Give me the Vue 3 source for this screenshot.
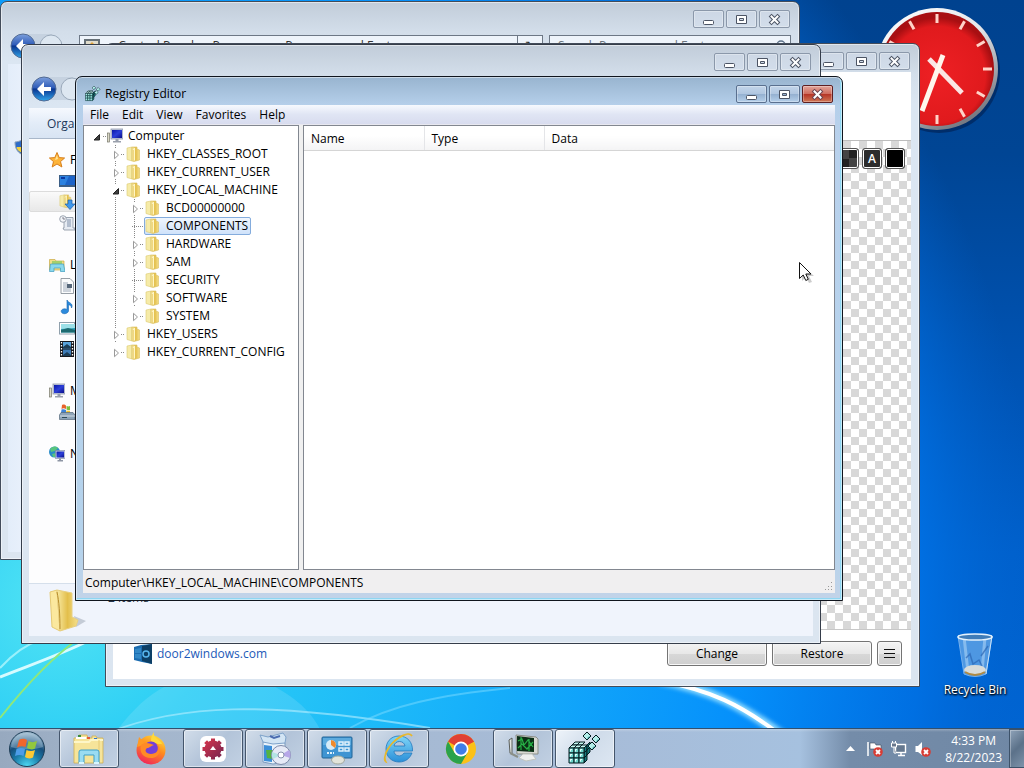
<script setup>
const controls = [
  { kind: 'min', label: 'Minimize' },
  { kind: 'max', label: 'Maximize' },
  { kind: 'close', label: 'Close' },
]
const menus = ['File', 'Edit', 'View', 'Favorites', 'Help']
const tree = [
  { name: 'Computer', level: 0, state: 'expanded', icon: 'i-computer' },
  { name: 'HKEY_CLASSES_ROOT', level: 1, state: 'collapsed' },
  { name: 'HKEY_CURRENT_USER', level: 1, state: 'collapsed' },
  { name: 'HKEY_LOCAL_MACHINE', level: 1, state: 'expanded' },
  { name: 'BCD00000000', level: 2, state: 'collapsed' },
  { name: 'COMPONENTS', level: 2, state: 'leaf', selected: true },
  { name: 'HARDWARE', level: 2, state: 'collapsed' },
  { name: 'SAM', level: 2, state: 'collapsed' },
  { name: 'SECURITY', level: 2, state: 'leaf' },
  { name: 'SOFTWARE', level: 2, state: 'collapsed' },
  { name: 'SYSTEM', level: 2, state: 'collapsed', last: true },
  { name: 'HKEY_USERS', level: 1, state: 'collapsed' },
  { name: 'HKEY_CURRENT_CONFIG', level: 1, state: 'collapsed', last: true },
]
const places = [
  { label: 'Favorites', icon: 'i-star', items: ['i-desktop', 'i-downloads', 'i-recent'] },
  { label: 'Libraries', icon: 'i-libraries', items: ['i-document', 'i-music', 'i-picture', 'i-video'] },
  { label: 'My Computer', icon: 'i-computer', items: ['i-drive'] },
  { label: 'Network', icon: 'i-network', items: [] },
]
const tasks = [
  { icon: 't-explorer', label: 'Windows Explorer', open: true },
  { icon: 't-firefox', label: 'Firefox', open: false },
  { icon: 't-gear', label: 'Settings tool', open: true },
  { icon: 't-setup', label: 'Programs and Features', open: true },
  { icon: 't-panel', label: 'Control Panel', open: true },
  { icon: 't-ie', label: 'Internet Explorer', open: true },
  { icon: 't-chrome', label: 'Chrome', open: false },
  { icon: 't-monitor', label: 'System monitor', open: true },
  { icon: 't-regedit', label: 'Registry Editor', open: true, active: true },
]
const cubes = [
  [1, 16], [6, 16], [11, 16], [1, 21], [6, 21], [11, 21], [1, 26], [6, 26], [11, 26],
]
const tops = [[7, 10], [12, 10], [4, 13], [9, 13], [14, 13]]
const sides = [[16, 16], [16, 21], [16, 26], [19, 13], [19, 18]]
const floating = [[19, 4], [28, 7], [24, 14]]
const ticks = [0, 30, 60, 90, 120, 150, 180, 210, 240, 270, 300, 330]
</script>

<template>
  <div class="desktop">
    <svg width="0" height="0" class="defs" aria-hidden="true">
      <defs>
        <linearGradient id="gFolder" x1="0" x2="1"><stop offset="0" stop-color="#f8e9a2" /><stop offset=".5" stop-color="#e3bf4c" /><stop offset="1" stop-color="#f5e08c" /></linearGradient>
        <linearGradient id="gBack" x1="0" y1="0" x2="0" y2="1"><stop offset="0" stop-color="#7c9fdc" /><stop offset=".45" stop-color="#2f5cb8" /><stop offset=".5" stop-color="#0a3590" /><stop offset="1" stop-color="#31a6ea" /></linearGradient>
        <radialGradient id="gOrb" cx=".5" cy="1" r="1"><stop offset="0" stop-color="#4fdcf6" /><stop offset=".4" stop-color="#1a7ba8" /><stop offset=".65" stop-color="#174f7c" /><stop offset="1" stop-color="#aac4d6" /></radialGradient>
        <linearGradient id="gFox" x1=".8" y1="0" x2=".3" y2="1"><stop offset="0" stop-color="#ffde3b" /><stop offset=".45" stop-color="#ff8a1e" /><stop offset="1" stop-color="#f0245c" /></linearGradient>
        <linearGradient id="gIe" x1="0" y1="0" x2="0" y2="1"><stop offset="0" stop-color="#7fd6f8" /><stop offset="1" stop-color="#2a8fd8" /></linearGradient>
        <linearGradient id="gGear" gradientUnits="userSpaceOnUse" x1="6" y1="6" x2="28" y2="28"><stop offset="0" stop-color="#e0364c" /><stop offset="1" stop-color="#6d2350" /></linearGradient>
        <linearGradient id="gScreen" x1="0" y1="0" x2="1" y2="1"><stop offset="0" stop-color="#0a17a8" /><stop offset=".5" stop-color="#2c3fd8" /><stop offset="1" stop-color="#0a108c" /></linearGradient>
        <symbol id="i-folder" viewBox="0 0 16 16">
          <path d="M1 2 L6 1 L6 15 L1 13.500 Z" fill="#f6eba8" stroke="#dcc970" stroke-width=".6" />
          <path d="M6 1 H11 V3 L13.500 4 V14 L8 15.500 L6 15 Z" fill="url(#gFolder)" stroke="#d9bd5c" stroke-width=".6" />
          <path d="M7 4 L8.500 2 V14.500" fill="none" stroke="#fff6c4" />
        </symbol>
        <symbol id="i-computer" viewBox="0 0 16 16">
          <rect x=".5" y="5" width="2" height="9" fill="#dad8c6" stroke="#77776a" stroke-width=".7" />
          <rect x="4" y="1" width="12" height="10" fill="#c6cde0" stroke="#8e96aa" stroke-width=".8" />
          <rect x="5" y="2" width="10" height="8" fill="url(#gScreen)" />
          <path d="M8.500 11 H11.500 V13 H14 V14.500 H6 V13 H8.500 Z" fill="#9aa0ac" />
        </symbol>
        <symbol id="i-star" viewBox="0 0 16 16"><path d="M8 .5 L10.200 5.600 L15.600 6 L11.500 9.600 L12.900 15 L8 12 L3.200 15 L4.500 9.600 L.4 6 L5.800 5.600 Z" fill="#fdb43a" stroke="#d77f1c" /><path d="M8 3 L9 7 L6 8 Z" fill="#ffe49a" /></symbol>
        <symbol id="i-desktop" viewBox="0 0 16 16"><rect y="2" width="16" height="12" fill="#3c5e86" /><rect x="1" y="3" width="15" height="9" fill="#1c63c8" /><path d="M1 3 H10 L6 12 H1 Z" fill="#2d82e0" /><path d="M2 4 H6 V6 H2 Z" fill="#0b37a0" /></symbol>
        <symbol id="i-downloads" viewBox="0 0 16 16"><use href="#i-folder" x="0" y="-1" width="14" height="16" /><path d="M9 6 H13 V10 H16 L11 15.500 L6 10 H9 Z" fill="#3f98ec" stroke="#1a5ca8" stroke-width=".7" /></symbol>
        <symbol id="i-recent" viewBox="0 0 16 16"><path d="M5 2.500 H14 V13 H16 V15 H5 L4 13 H5 Z" fill="#e6ebf2" stroke="#8790a0" stroke-width=".8" /><path d="M8 5 H12 M8 7 H12 M8 9 H12 M8 11 H12" stroke="#7e90aa" /><circle cx="4" cy="4" r="3.300" fill="#f3f5f8" stroke="#8790a0" stroke-width=".8" /><path d="M4 2 V4 H6" fill="none" stroke="#667" stroke-width=".8" /></symbol>
        <symbol id="i-libraries" viewBox="0 0 16 16"><path d="M.5 2.500 H6 L7 4 H15 V13 H.5 Z" fill="#f3de86" stroke="#caa945" stroke-width=".7" /><path d="M3 7 H13 V4 H3 Z" fill="#a5cf6c" /><path d="M1.500 7 H14.500 L16 14.500 H11.500 V11 H5 V14.500 H.5 Z" fill="#8ad8ec" stroke="#3f9cc0" stroke-width=".7" /></symbol>
        <symbol id="i-document" viewBox="0 0 16 16"><path d="M2 .5 H11 L14.500 4 V15.500 H2 Z" fill="#fbfcfd" stroke="#7e8791" stroke-width=".8" /><path d="M4 5 H9 M4 7 H9 M4 9 H9 M4 11 H12 M4 13 H12" stroke="#8b97a8" stroke-width=".8" /><rect x="8" y="6" width="5" height="4" fill="#56677a" /></symbol>
        <symbol id="i-music" viewBox="0 0 16 16"><path d="M8 1 C9 4 15 4 12.500 9 C12.500 6.500 10.500 6 9.500 5.500 V12 C9 15 3 16 2.200 12.500 C2 10 6 9 8 10.500 Z" fill="#2c8adc" stroke="#1667b4" stroke-width=".6" /></symbol>
        <symbol id="i-picture" viewBox="0 0 16 16"><rect x=".5" y="2.500" width="15" height="11.500" fill="#fff" stroke="#90a0ac" /><rect x="2" y="4" width="14" height="8.500" fill="#2d9fb8" /><path d="M2 4 H16 V8 L2 9 Z" fill="#9ce0e8" /><path d="M2 10 L9 8 L16 10 V12.500 H2 Z" fill="#1d6a70" /></symbol>
        <symbol id="i-video" viewBox="0 0 16 16"><rect x="1" width="14" height="16" fill="#17191f" /><rect x="4" y="1" width="8" height="6.500" fill="#5aa4dc" /><rect x="4" y="8.500" width="8" height="6.500" fill="#3e7cb8" /><path d="M4 6 L8 3 L12 6 V7.500 H4 Z M4 14 L8 11 L12 14 V15 H4 Z" fill="#1c3d56" /><path d="M2.500 1 V16 M13.500 1 V16" stroke="#fff" stroke-width="1.300" stroke-dasharray="1.500 1.500" /></symbol>
        <symbol id="i-drive" viewBox="0 0 16 16"><path d="M3 1 C5 0 6 1 7 1.500 V5 C5 4 4 4 2.500 5 Z" fill="#e8632c" /><path d="M7.500 2 C9 2.500 10 2.500 11 2 V6 C10 6.500 8.500 6 7.500 5.500 Z" fill="#7cc03c" /><path d="M2.500 5.500 C4 5 5.500 5 7 6 V9 H2 Z" fill="#3d83d8" /><path d="M7.500 6.500 L11 7 V9 H7 Z" fill="#f6c52c" /><path d="M2 8.500 H14 L16 11 V15.500 H.5 V11 Z" fill="#8da4b8" stroke="#566a7c" stroke-width=".7" /><path d="M1 12 H16" stroke="#d0dbe4" /><rect x="3" y="13" width="5" height="1" fill="#2d4a58" /></symbol>
        <symbol id="i-network" viewBox="0 0 16 16"><circle cx="5.500" cy="6" r="5.500" fill="#2a8cc8" /><path d="M1 3 C4 0 7 0 9 2 L6 5 L2 6 Z M3 8 L7 7 V11 H4 Z" fill="#57c47e" /><rect x="6.500" y="4.500" width="9.500" height="8" fill="#d4dbe6" stroke="#7a86a0" stroke-width=".6" /><rect x="7.500" y="5.500" width="7.500" height="6" fill="url(#gScreen)" /><path d="M10 12.500 H12 V14 H14 V15.500 H8.500 V14 H10 Z" fill="#8d95a4" /></symbol>
        <symbol id="i-shield" viewBox="0 0 16 16"><path d="M8 1 C10 2 13 3 15 3 C15 9 13 13 8 15.500 C3 13 1 9 1 3 C3 3 6 2 8 1 Z" fill="#2e6cc8" stroke="#8ea2b8" /><path d="M8 2 V8 H14 C14 5 14.500 4 14 4 C12 4 10 3 8 2 Z M8 8 V14 C5 12.500 3 11 2.500 8 Z" fill="#f4d23e" /></symbol>
        <symbol id="t-explorer" viewBox="0 0 34 34">
          <path d="M2 6 H6 L7 3 H15 L16 6 H20 V4 H24 L25 6 H31 V31 H2 Z" fill="#f6e49a" stroke="#cfae52" stroke-width=".8" />
          <path d="M4 5 H14 V7 H4 Z" fill="#fff" /><rect x="6" y="3" width="3" height="2" fill="#3c8d3c" /><rect x="15" y="5" width="3" height="2" fill="#e45a36" /><rect x="22" y="6" width="3" height="2" fill="#2d72d0" />
          <path d="M2 10 H17 L19 8 H31" fill="none" stroke="#fdf6c8" stroke-width="2" /><path d="M27 8 V30" stroke="#e6ca72" />
          <path d="M7 31 V20 Q7 18 9 18 H25 Q27 18 27 20 V31 H22 V23 H12 V31 Z" fill="#9adcf2" stroke="#3f9fc8" /><path d="M7 31 H12 M22 31 H27" stroke="#d8f6ff" stroke-width="2" />
        </symbol>
        <symbol id="t-firefox" viewBox="0 0 34 34">
          <circle cx="17" cy="18" r="14.500" fill="url(#gFox)" /><path d="M20 0 C19 5 23 6 27 10 L31 17 L28 12 L23 12 L17 9 C17 5 18 3 20 0 Z" fill="#ffd83a" /><path d="M5 5 L3 15 L12 12 L9 9 Z" fill="#ff9a24" />
          <circle cx="17" cy="17" r="7.500" fill="#7340d8" /><path d="M7 13 C11 9 17 12 20 13 C16 14 16 16 13 16 C9 19 14 24 21 21 C24 20 25 15 22 11 C28 15 27 26 17 26 C9 26 5 20 7 13 Z" fill="#ff8a26" />
        </symbol>
        <symbol id="t-gear" viewBox="0 0 34 34">
          <rect x="4" y="4" width="26" height="26" rx="6" fill="#fff" /><circle cx="17" cy="17" r="8.500" fill="url(#gGear)" /><path d="M17 6.500 V27.500 M6.500 17 H27.500 M9.600 9.600 L24.400 24.400 M24.400 9.600 L9.600 24.400" stroke="url(#gGear)" stroke-width="4" /><path d="M17 14 L20 18 H14 Z" fill="#fff" />
        </symbol>
        <symbol id="t-setup" viewBox="0 0 34 34">
          <path d="M5 10 L17 8 L27 11 V30 L15 32 L5 30 Z" fill="#eaf3fb" stroke="#7c9cc0" /><path d="M5 10 L2 3 L10 5 L25 1 L28 5 L27 11 L15 12 Z" fill="#d3e5f4" stroke="#7ea3ca" /><path d="M6 13 L14 14 V30 L6 29 Z" fill="#3d8fd8" /><path d="M8 18 L15 18 V27 L9 26 Z" fill="#53b341" /><path d="M12 4 L16 6 L22 4" fill="none" stroke="#4b6cb0" stroke-width="2" />
          <circle cx="23" cy="23" r="9.500" fill="#e6eaf6" stroke="#7e8aa8" /><path d="M23 23 L31 18 A9 9 0 0 1 32 26 Z" fill="#b7a7e8" /><path d="M23 23 L15 27 A9 9 0 0 1 14 20 Z" fill="#b4e4e4" /><circle cx="23" cy="23" r="3" fill="#fff" stroke="#8792ae" />
        </symbol>
        <symbol id="t-panel" viewBox="0 0 34 34">
          <rect x="2" y="5" width="30" height="21" rx="1" fill="#3f94d2" stroke="#216597" /><rect x="3" y="6" width="28" height="7" fill="#71bae6" opacity=".6" /><circle cx="11" cy="13" r="5" fill="#d6ebf7" /><path d="M11 13 V8 A5 5 0 0 1 15 16 Z" fill="#f08a2c" /><g fill="none" stroke="#dff1fc" stroke-width="1.500"><rect x="19" y="10" width="4" height="3" /><rect x="25" y="10" width="4" height="3" /><rect x="19" y="16" width="4" height="3" /><rect x="25" y="16" width="4" height="3" /></g><path d="M7 21 H14" stroke="#dff1fc" stroke-width="2" stroke-dasharray="2 1" /><ellipse cx="18" cy="28" rx="6.500" ry="4" fill="#e3e4da" stroke="#a3a99c" />
        </symbol>
        <symbol id="t-ie" viewBox="0 0 34 34">
          <path d="M17 4 C8 4 4 11 4 17 C4 25 10 30 17 30 C24 30 28 26 30 21 H22 C19 26 12 24 12 19 H30.500 C31 10 25 4 17 4 Z M12 14 C13 8 22 8 23 14 Z" fill="url(#gIe)" stroke="#2379bd" stroke-width=".8" fill-rule="evenodd" /><path d="M30 4 C27 -1 15 4 8 14 C3 21 1 29 4 30 C0 22 8 12 17 6 C24 1 29 1 30 4 Z" fill="#fbd23c" stroke="#e8b82c" stroke-width="1.500" />
        </symbol>
        <symbol id="t-chrome" viewBox="0 0 34 34">
          <circle cx="17" cy="17" r="15" fill="#fbc117" /><path d="M17 17 L4 9.500 A15 15 0 0 1 30 9.500 Z" fill="#e04033" /><path d="M17 9.500 H30.500 L24 12 Z" fill="#e04033" /><path d="M4 9.500 A15 15 0 0 0 17 32 L23.500 20.700 L10.500 20.700 Z" fill="#2aa24c" /><circle cx="17" cy="17" r="7.500" fill="#fff" /><circle cx="17" cy="17" r="5.800" fill="#3f7de8" />
        </symbol>
        <symbol id="t-monitor" viewBox="0 0 34 34">
          <path d="M3 8 L6 6 V22 L4 21 Z" fill="#e4e6e2" stroke="#5b5f5a" /><path d="M10 3 L30 5 L32 7 V22 L11 22 Z" fill="#d8d9d2" stroke="#8a8d86" /><path d="M11 4 L28 6 V20 L11 19 Z" fill="#0c2f16" /><path d="M12 9 L16 7 L18 13 L22 8 L27 15 M12 16 L16 12 L21 17 L27 10 M15 5 V18 M23 7 V19" fill="none" stroke="#27b045" stroke-width="1.200" /><path d="M17 22 H26 L30 27 L20 29 L13 26 Z" fill="#eef0ee" stroke="#c0c4be" /><path d="M4 21 L12 25" stroke="#8a8f88" stroke-width="2" />
        </symbol>
        <symbol id="t-regedit" viewBox="0 0 34 34">
          <g stroke="#041c20" stroke-width="1" stroke-linejoin="round">
            <path v-for="(c, i) in tops" :key="'t' + i" d="M0 3 L3 0 H8 L5 3 Z" fill="#c4f6f0" :transform="`translate(${c[0] - 3} ${c[1]})`" />
            <path v-for="(c, i) in sides" :key="'s' + i" d="M0 0 L3 -3 V2 L0 5 Z" fill="#177a7c" :transform="`translate(${c[0]} ${c[1]})`" />
            <g v-for="(c, i) in cubes" :key="'c' + i" :transform="`translate(${c[0]} ${c[1]})`"><rect width="5" height="5" fill="#6fd8ce" /><path d="M1.200 1.500 H3 M1.500 1.500 V3.500" stroke="#e6fffc" fill="none" /></g>
            <g v-for="(c, i) in floating" :key="'f' + i" :transform="`translate(${c[0]} ${c[1]})`"><path d="M-4 0 L0 -4 L4 0 L0 4 Z" fill="#b4efea" /><path d="M1 1 L3.500 0 L0 3.500 Z" fill="#2d9494" stroke="none" /></g>
          </g>
        </symbol>
      </defs>
    </svg>

    <svg class="wallpaper" viewBox="0 0 1024 768" preserveAspectRatio="none" aria-hidden="true">
      <defs>
        <linearGradient id="wSky" x1="0" y1="0" x2="0" y2="1"><stop offset="0" stop-color="#00428f" /><stop offset=".2" stop-color="#004594" /><stop offset=".5" stop-color="#0054b5" /><stop offset=".72" stop-color="#0060cc" /><stop offset=".95" stop-color="#0064d2" /></linearGradient>
        <radialGradient id="wGlow" gradientUnits="userSpaceOnUse" cx="60" cy="600" r="980"><stop offset="0" stop-color="#52e4f4" /><stop offset=".16" stop-color="#2bcdf5" /><stop offset=".42" stop-color="#18b2fa" /><stop offset=".7" stop-color="#0590fb" /><stop offset=".88" stop-color="#0072e6" stop-opacity=".8" /><stop offset="1" stop-color="#0062cc" stop-opacity="0" /></radialGradient>
        <filter id="soft"><feGaussianBlur stdDeviation="2" /></filter>
      </defs>
      <rect width="1024" height="768" fill="url(#wSky)" />
      <rect width="1024" height="768" fill="url(#wGlow)" />
      <path d="M110 740 C145 690 170 680 215 670 L270 684 C300 700 315 715 325 740 Z" fill="#fff" opacity=".12" />
      <path d="M110 732 C180 705 260 700 430 728" fill="none" stroke="#b8efff" stroke-width="2" opacity=".6" />
      <path d="M350 728 C390 705 440 695 510 688" fill="none" stroke="#7ddcff" stroke-width="2" opacity=".5" />
      <path d="M0 677 C30 665 60 655 90 640" fill="none" stroke="#d6fbff" stroke-width="3" />
      <path d="M0 668 C12 655 24 645 40 640" fill="none" stroke="#9af0fb" stroke-width="2" />
      <path d="M0 718 C22 690 48 660 82 636" fill="none" stroke="#8fe87a" stroke-width="2" />
      <path d="M660 680 C710 690 740 704 786 738" fill="none" stroke="#8edaff" stroke-width="9" filter="url(#soft)" />
      <path d="M660 681 C710 690 740 704 782 736" fill="none" stroke="#fff" stroke-width="4" />
    </svg>

    <svg class="clock" viewBox="0 0 132 132" role="img" aria-label="Clock">
      <defs>
        <linearGradient id="rim" x1="0" y1="0" x2=".6" y2="1"><stop offset="0" stop-color="#fff" /><stop offset=".5" stop-color="#e4e6ea" /><stop offset="1" stop-color="#777b84" /></linearGradient>
        <radialGradient id="face" cx=".5" cy=".55" r=".5"><stop offset="0" stop-color="#ee2024" /><stop offset=".85" stop-color="#e01a1d" /><stop offset="1" stop-color="#a80f12" /></radialGradient>
      </defs>
      <circle cx="67" cy="68" r="61" fill="#001c48" opacity=".55" />
      <circle cx="65" cy="65" r="61" fill="url(#rim)" />
      <circle cx="65" cy="65" r="57" fill="url(#face)" />
      <path v-for="t in ticks" :key="t" d="M65 10 V19" stroke="#ffd3c8" stroke-width="3" :transform="`rotate(${t} 65 65)`" />
      <path d="M57 55 L90 89" stroke="#fbe6e4" stroke-width="5" />
      <path d="M71 51 L50 107" stroke="#fff6ec" stroke-width="5" />
    </svg>

    <a class="bin" href="#">
      <svg width="40" height="46" viewBox="0 0 40 46" aria-hidden="true">
        <path d="M3 4 H37 L31 42 Q20 47 9 42 Z" fill="#8fc0ee" opacity=".55" stroke="#d5ecff" /><path d="M3 4 H37 L31 42" fill="none" stroke="#c8e2f8" /><path d="M9 5 L13 40 M30 5 L27 40" stroke="#d8efff" stroke-width="3" opacity=".4" /><path d="M11 26 L15 22 L18 32 L24 28 L27 34 M33 14 L26 24" fill="none" stroke="#2c66b4" stroke-width="1.500" opacity=".7" /><ellipse cx="20" cy="38" rx="11" ry="5" fill="#d9dcda" /><path d="M10 40 Q20 46 30 40" fill="none" stroke="#b08a42" stroke-width="2" /><ellipse cx="20" cy="5" rx="17" ry="3" fill="#3f7cb8" stroke="#e3f1fc" stroke-width="1.500" />
      </svg>
      <span>Recycle Bin</span>
    </a>

    <section class="window programs" aria-label="Programs and Features">
      <header class="caption">
        <div class="controls"><button v-for="c in controls" :key="c.kind" :aria-label="c.label"><svg width="15" height="13" viewBox="0 0 15 13"><rect v-if="c.kind === 'min'" x="2.500" y="7.500" width="10" height="4" rx="1" fill="#fff" stroke="#4c5464" /><path v-else-if="c.kind === 'max'" d="M2.500 2.500 H12.500 V10.500 H2.500 Z M5.500 5.500 H9.500 V7.500 H5.500 Z" fill="#fff" fill-rule="evenodd" stroke="#4c5464" /><g v-else fill="none"><path d="M4.500 3.500 L10.500 9.500 M10.500 3.500 L4.500 9.500" stroke="#4c5464" stroke-width="4" stroke-linecap="square" /><path d="M4.500 3.500 L10.500 9.500 M10.500 3.500 L4.500 9.500" stroke="#fff" stroke-width="2" stroke-linecap="square" /></g></svg></button></div>
      </header>
      <div class="nav">
        <svg class="back" viewBox="0 0 54 26" aria-hidden="true"><path d="M13 1 H42 V24 H13" fill="#b8c6d6" opacity=".5" /><circle cx="13" cy="13" r="12" fill="url(#gBack)" stroke="#526b94" /><path d="M6 13 L13 6 V11 H20 V15 H13 V20 Z" fill="#fff" /><circle cx="41" cy="13" r="11" fill="#dde7f1" stroke="#9aa9ba" /></svg>
        <div class="address"><svg class="ic" aria-hidden="true"><rect y="1" width="16" height="13" fill="#667077" /><rect x="2" y="3" width="12" height="10" fill="#e0dccb" /><path d="M4 8 L8 4 L12 8 Z" fill="#e2a33a" /></svg><span>▸&nbsp; Control Panel&nbsp; ▸&nbsp; Programs&nbsp; ▸&nbsp; Programs and Features</span><button class="refresh" aria-label="Refresh">↻</button></div>
        <label class="search"><input type="search" placeholder="Search Programs and Features" aria-label="Search Programs and Features" /><svg width="12" height="12" viewBox="0 0 12 12" aria-hidden="true"><circle cx="7" cy="5" r="4" fill="none" stroke="#5d7188" stroke-width="1.500" /><path d="M4 8 L1 11" stroke="#5d7188" stroke-width="2" /></svg></label>
      </div>
      <div class="programs-body"><svg class="ic" aria-hidden="true"><use href="#i-shield" /></svg></div>
    </section>

    <section class="window changer" aria-label="Taskbar customizer">
      <header class="caption">
        <div class="controls"><button v-for="c in controls" :key="c.kind" :aria-label="c.label"><svg width="15" height="13" viewBox="0 0 15 13"><rect v-if="c.kind === 'min'" x="2.500" y="7.500" width="10" height="4" rx="1" fill="#fff" stroke="#4c5464" /><path v-else-if="c.kind === 'max'" d="M2.500 2.500 H12.500 V10.500 H2.500 Z M5.500 5.500 H9.500 V7.500 H5.500 Z" fill="#fff" fill-rule="evenodd" stroke="#4c5464" /><g v-else fill="none"><path d="M4.500 3.500 L10.500 9.500 M10.500 3.500 L4.500 9.500" stroke="#4c5464" stroke-width="4" stroke-linecap="square" /><path d="M4.500 3.500 L10.500 9.500 M10.500 3.500 L4.500 9.500" stroke="#fff" stroke-width="2" stroke-linecap="square" /></g></svg></button></div>
      </header>
      <div class="changer-head"></div>
      <div class="preview">
        <button class="swatch checks" aria-label="Dark checkers"></button>
        <button class="swatch letter">A</button>
        <button class="swatch black" aria-label="Black"></button>
      </div>
      <footer class="changer-foot">
        <svg width="18" height="20" viewBox="0 0 18 20" aria-hidden="true"><path d="M0 3 L7 1 L18 0 V20 L8 18 L0 16 Z" fill="#1b6cb0" /><path d="M8 2 L18 0 V20 L8 17 Z" fill="#0d3f66" /><path d="M1 5 L7 4 V9 L1 9 Z M1 10 H7 V15 L1 14 Z" fill="#3288c6" /><circle cx="12" cy="10" r="3" fill="none" stroke="#58b7f0" stroke-width="1.500" /></svg>
        <a href="#">door2windows.com</a>
        <span class="grow"></span>
        <button class="push">Change</button>
        <button class="push">Restore</button>
        <button class="push more" aria-label="Menu"><svg width="11" height="9" viewBox="0 0 11 9"><path d="M0 .5 H11 M0 4.500 H11 M0 8.500 H11" stroke="#111" /></svg></button>
      </footer>
    </section>

    <section class="window explorer" aria-label="Explorer">
      <header class="caption">
        <div class="controls"><button v-for="c in controls" :key="c.kind" :aria-label="c.label"><svg width="15" height="13" viewBox="0 0 15 13"><rect v-if="c.kind === 'min'" x="2.500" y="7.500" width="10" height="4" rx="1" fill="#fff" stroke="#4c5464" /><path v-else-if="c.kind === 'max'" d="M2.500 2.500 H12.500 V10.500 H2.500 Z M5.500 5.500 H9.500 V7.500 H5.500 Z" fill="#fff" fill-rule="evenodd" stroke="#4c5464" /><g v-else fill="none"><path d="M4.500 3.500 L10.500 9.500 M10.500 3.500 L4.500 9.500" stroke="#4c5464" stroke-width="4" stroke-linecap="square" /><path d="M4.500 3.500 L10.500 9.500 M10.500 3.500 L4.500 9.500" stroke="#fff" stroke-width="2" stroke-linecap="square" /></g></svg></button></div>
      </header>
      <div class="nav"><svg class="back" viewBox="0 0 54 26" aria-hidden="true"><path d="M13 1 H42 V24 H13" fill="#b8c6d6" opacity=".5" /><circle cx="13" cy="13" r="12" fill="url(#gBack)" stroke="#526b94" /><path d="M6 13 L13 6 V11 H20 V15 H13 V20 Z" fill="#fff" /><circle cx="41" cy="13" r="11" fill="#dde7f1" stroke="#9aa9ba" /></svg></div>
      <div class="toolbar"><button>Organize</button></div>
      <nav class="places">
        <div v-for="p in places" :key="p.label" class="group">
          <div class="place"><svg class="ic" aria-hidden="true"><use :href="'#' + p.icon" /></svg><span>{{ p.label }}</span></div>
          <div v-for="i in p.items" :key="i" class="place child" :class="{ picked: i === 'i-downloads' }"><svg class="ic" aria-hidden="true"><use :href="'#' + i" /></svg></div>
        </div>
      </nav>
      <footer class="details">
        <svg width="40" height="44" viewBox="0 0 40 44" aria-hidden="true"><path d="M26 27 L38 32 L28 38 Z" fill="#8f98a8" opacity=".45" /><path d="M2 3 L9 1 L12 42 L4 38 Z" fill="#fbe89e" stroke="#e6ca74" /><path d="M9 1 L24 4 V28 L30 31 L28 37 L12 42 Z" fill="url(#gFolder)" stroke="#e8cf80" /><path d="M9 3 C11 12 12 25 12 40" fill="none" stroke="#b98e2c" /></svg>
        <span>2 items</span>
      </footer>
    </section>

    <section class="window registry" aria-label="Registry Editor">
      <header class="caption">
        <div class="title"><svg class="ic" aria-hidden="true"><use href="#t-regedit" /></svg><span>Registry Editor</span></div>
        <div class="controls"><button v-for="c in controls" :key="c.kind" :class="c.kind" :aria-label="c.label"><svg width="15" height="13" viewBox="0 0 15 13"><rect v-if="c.kind === 'min'" x="2.500" y="7.500" width="10" height="4" rx="1" fill="#fff" stroke="#4c5464" /><path v-else-if="c.kind === 'max'" d="M2.500 2.500 H12.500 V10.500 H2.500 Z M5.500 5.500 H9.500 V7.500 H5.500 Z" fill="#fff" fill-rule="evenodd" stroke="#4c5464" /><g v-else fill="none"><path d="M4.500 3.500 L10.500 9.500 M10.500 3.500 L4.500 9.500" stroke="#6c4450" stroke-width="4" stroke-linecap="square" /><path d="M4.500 3.500 L10.500 9.500 M10.500 3.500 L4.500 9.500" stroke="#fff" stroke-width="2" stroke-linecap="square" /></g></svg></button></div>
      </header>
      <nav class="menubar"><button v-for="m in menus" :key="m">{{ m }}</button></nav>
      <div class="panes">
        <ul class="tree">
          <li v-for="n in tree" :key="n.name" :class="['l' + n.level, { last: n.last }]">
            <i v-if="n.level === 2" class="trunk"></i>
            <span class="branch"><svg v-if="n.state !== 'leaf'" width="9" height="9" viewBox="0 0 9 9" aria-hidden="true"><path v-if="n.state === 'expanded'" d="M6.500 2 V7.500 H1 Z" fill="#404040" stroke="#222" /><path v-else d="M2.500 .8 V8.200 L6.500 4.500 Z" fill="#fff" stroke="#9a9a9a" /></svg></span>
            <span class="node" :class="{ selected: n.selected }"><svg class="ic" aria-hidden="true"><use :href="'#' + (n.icon || 'i-folder')" /></svg><span>{{ n.name }}</span></span>
          </li>
        </ul>
        <div class="values">
          <table><thead><tr><th class="c1">Name</th><th class="c1">Type</th><th>Data</th></tr></thead></table>
        </div>
      </div>
      <footer class="status"><span>Computer\HKEY_LOCAL_MACHINE\COMPONENTS</span><svg width="9" height="9" viewBox="0 0 9 9" aria-hidden="true"><path d="M7 0 h1 v1 h-1z M4 4 h1 v1 h-1z M7 4 h1 v1 h-1z M1 7 h1 v1 h-1z M4 7 h1 v1 h-1z M7 7 h1 v1 h-1z" fill="#999" /></svg></footer>
    </section>

    <svg class="cursor" viewBox="0 0 15 21" aria-hidden="true"><path d="M3 3 V19 L7 15 L10 21 L13 20 L10 14 H15 Z" fill="#000" opacity=".2" /><path d="M.5 .5 V16.500 L4.200 13 L6.800 18.500 L9.300 17.300 L6.800 12 H12 Z" fill="#fff" stroke="#111" /></svg>

    <footer class="taskbar">
      <button class="start" aria-label="Start"><svg width="38" height="38" viewBox="0 0 38 38"><circle cx="19" cy="19" r="17.500" fill="url(#gOrb)" stroke="#1f3e57" /><path d="M3 17 C4 7 11 3 19 3 C27 3 34 8 35 17 C26 20 12 20 3 17 Z" fill="#dcecf5" opacity=".3" /><path d="M11 10 C14 8 17 9 19 10 L17.500 17 C15 16 12 16 9 17.500 Z" fill="#f0662c" /><path d="M20.500 11 C23 12.500 26 12.500 29 11 L27 18.500 C24 20 22 19.500 19 18 Z" fill="#92c83e" /><path d="M8.500 19 C12 17.500 14 17.500 17 19 L15.500 26 C13 24.500 10 24.500 7 26 Z" fill="#4d9ce8" /><path d="M18.500 20 C21 21 24 21.500 27 20 L25 27.500 C22 29 19 28.500 17 27 Z" fill="#fcc935" /></svg></button>
      <button v-for="t in tasks" :key="t.icon" class="task" :class="{ running: t.open, active: t.active }" :aria-label="t.label"><svg width="34" height="34" aria-hidden="true"><use :href="'#' + t.icon" /></svg></button>
      <span class="grow"></span>
      <div class="tray">
        <svg width="9" height="5" viewBox="0 0 9 5" aria-hidden="true"><path d="M4.500 0 L9 5 H0 Z" fill="#fff" /></svg>
        <svg width="16" height="16" viewBox="0 0 16 16" aria-hidden="true"><path d="M1 1 V15" stroke="#fff" stroke-width="1.500" /><path d="M3 2 H8 L9 4 H14 V10 H8 L7 8 H3 Z" fill="#fff" stroke="#3e4a5c" stroke-width=".6" /><circle cx="11" cy="11" r="4.800" fill="#d83c34" /><path d="M9 9 L13 13 M13 9 L9 13" stroke="#fff" stroke-width="1.800" /></svg>
        <svg width="16" height="16" viewBox="0 0 16 16" aria-hidden="true"><rect x="4.500" y="3.500" width="10" height="8" fill="#65788f" stroke="#fff" stroke-width="1.400" /><path d="M7 14.500 H14 M10 12 V14" stroke="#fff" stroke-width="1.500" /><path d="M.5 2 H5.500 V6 H.5 Z M1.500 0 V2 M4.500 0 V2 M3 6 V12 H5" fill="#68778c" stroke="#fff" /></svg>
        <svg width="16" height="16" viewBox="0 0 16 16" aria-hidden="true"><path d="M.5 5 H3 L7 1 V14 L3 11 H.5 Z" fill="#fff" /><circle cx="11" cy="11" r="4.800" fill="#d83c34" /><path d="M9 9 L13 13 M13 9 L9 13" stroke="#fff" stroke-width="1.800" /></svg>
      </div>
      <div class="time"><span>4:33 PM</span><span>8/22/2023</span></div>
      <button class="peek" aria-label="Show desktop"></button>
    </footer>
  </div>
</template>

<style>
html, body { margin: 0; background: #0054b5; }
</style>

<style scoped>
.desktop { position: relative; height: 100vh; overflow: hidden; font-family: "Open Sans", "Noto Sans", sans-serif; font-size: 12px; line-height: 18px; color: #000; }
.desktop * { box-sizing: border-box; }
.defs { position: absolute; }
button { font: inherit; color: inherit; margin: 0; padding: 0; border: 0; background: none; }
.wallpaper { position: absolute; inset: 0; width: 100%; height: 100%; }
.clock { position: absolute; top: 4px; right: 20px; width: 132px; height: 132px; }
.bin { position: absolute; right: 12px; top: 632px; width: 74px; display: flex; flex-direction: column; align-items: center; gap: 3px; color: #fff; text-decoration: none; white-space: nowrap; text-shadow: 1px 1px 2px #000, 0 1px 2px #000; }
.ic { width: 16px; height: 16px; flex: none; }
.grow { flex: 1; }

.window { position: absolute; display: flex; flex-direction: column; padding: 0 7px 7px; border: 1px solid #434c5a; border-radius: 7px 7px 0 0; background: linear-gradient(#c1ccd9, #d3deea 30px, #dbe6f2 60px, #dbe5f0); box-shadow: inset 0 0 0 1px rgba(255, 255, 255, .5); }
.caption { display: flex; height: 28px; flex: none; }
.controls { display: flex; gap: 2px; margin: 8px 2px 0 auto; }
.controls button { display: flex; align-items: center; justify-content: center; width: 31px; height: 18px; border: 1px solid #8b98aa; border-radius: 2px; background: rgba(215, 226, 240, .4); box-shadow: inset 0 0 0 1px rgba(255, 255, 255, .3); }
.nav { display: flex; align-items: center; height: 32px; flex: none; padding-left: 2px; }
.back { width: 54px; height: 26px; flex: none; }

.programs { left: 0; right: 224px; top: 1px; bottom: 208px; }
.address { display: flex; align-items: center; gap: 6px; width: 464px; height: 22px; margin-left: 15px; padding-left: 4px; border: 1px solid #6d7886; background: #eef4fb; color: #333; white-space: nowrap; }
.address span { flex: 1; }
.refresh { width: 25px; align-self: stretch; border-left: 1px solid #6d7886; }
.search { display: flex; align-items: center; flex: 1; min-width: 0; height: 22px; margin: 0 1px 0 6px; padding: 0 4px 0 8px; border: 1px solid #6d7886; background: #eef4fb; }
.search input { flex: 1; min-width: 0; padding: 0; border: 0; background: none; font: inherit; }
.search input::placeholder { color: #6b747e; opacity: 1; }
.programs-body { flex: 1; margin-top: 2px; padding: 75px 6px; background: linear-gradient(90deg, #e3edfa, #edf3fd 30px); }

.changer { left: 105px; right: 104px; top: 43px; bottom: 81px; padding-right: 8px; }
.changer .controls { margin-right: 1px; }
.changer-head { height: 69px; flex: none; background: #fff; border-bottom: 1px solid #bdbdbd; }
.preview { flex: 1; display: flex; justify-content: flex-end; align-items: flex-start; gap: 3px; padding: 7px 6px; border-bottom: 1px solid #c8c8c8; background: conic-gradient(#fff 25%, #d8d8d8 0 50%, #fff 0 75%, #d8d8d8 0) right -12px top 0 / 16px 16px; }
.swatch { width: 20px; height: 21px; border: 1px solid #555; border-radius: 3px; box-shadow: inset 0 0 0 1px #fff; font-weight: 600; color: #fff; }
.checks { background: conic-gradient(#222 25%, #444 0 50%, #222 0 75%, #444 0); }
.letter { background: #2c2c2c; }
.black { background: #000; }
.changer-foot { display: flex; align-items: center; height: 49px; flex: none; padding: 0 9px 2px 21px; background: #fff; }
.changer-foot a { margin-left: 5px; color: #1c5ab8; text-decoration: none; }
.push { width: 100px; height: 25px; margin-left: 5px; border: 1px solid #747474; border-radius: 3px; background: linear-gradient(#f4f4f4, #e8e8e8 50%, #d8d8d8 51%, #cfcfcf); box-shadow: inset 0 0 0 1px #f8f8f8; }
.more { width: 25px; }

.explorer { left: 21px; right: 203px; top: 44px; bottom: 124px; border-color: #353d4a; }
.toolbar { height: 31px; flex: none; margin-top: 3px; padding: 2px 0 0 18px; display: flex; align-items: center; background: linear-gradient(#f6f9fe, #e3ecf8 50%, #d8e4f3); border-bottom: 1px solid #a9b7ca; color: #1e395b; }
.toolbar button { width: 30px; overflow: hidden; text-align: left; }
.places { flex: 1; display: flex; flex-direction: column; gap: 21px; padding-top: 10px; background: #fdfdfe; overflow: hidden; }
.place { display: flex; align-items: center; gap: 5px; height: 21px; padding-left: 20px; }
.child { padding-left: 30px; }
.picked { border: 1px solid #dcdcdc; border-radius: 2px; padding-left: 29px; background: linear-gradient(#fafafa, #e8e8e8); }
.details { display: flex; align-items: flex-start; height: 53px; flex: none; gap: 20px; padding: 5px 19px; border-top: 1px solid #d5dfeb; background: #f0f4fc; color: #24334a; }

.registry { left: 75px; right: 181px; top: 76px; bottom: 167px; border-color: #10151d; background: linear-gradient(#98b4cf, #b5cfea 28px, #b9d1ec 70px, #b5d3ec 90%, #c2d3e8); box-shadow: inset 0 0 0 1px rgba(255, 255, 255, .5), inset -2px -2px 0 #8fd6f2; }
.title { display: flex; align-items: center; gap: 4px; padding: 5px 2px 0; }
.registry .controls button { border-color: #5a708f; background: linear-gradient(#c2d5ea, #b0c6e0 50%, #94b0d0 51%, #b4cfea); }
.registry .controls .close { border-color: #5e1f22; background: linear-gradient(#e2a59b, #cf6d5f 48%, #b53527 52%, #d07755); }
.menubar { display: flex; gap: 13px; height: 20px; flex: none; padding: 0 7px; background: linear-gradient(#f6f9fe, #e0e5f4 50%, #d8dcef); border-bottom: 1px solid #e8e8f0; }
.panes { flex: 1; display: flex; gap: 4px; background: #f0f0f0; min-height: 0; }
.tree { width: 216px; flex: none; margin: 0; padding: 1px 0; list-style: none; border: 1px solid #828790; background: #fff; }
.tree li { display: flex; height: 18px; align-items: stretch; }
.l0 { padding-left: 9px; }
.l1 { padding-left: 28px; }
.l2 { padding-left: 31px; }
.trunk { width: 16px; background: linear-gradient(#888 50%, transparent 0) 0 0 / 1px 2px repeat-y; }
.branch { display: flex; align-items: center; width: 13px; background: linear-gradient(#888 50%, transparent 0) 3px 0 / 1px 2px repeat-y, linear-gradient(90deg, #888 50%, transparent 0) 3px 9px / 2px 1px repeat-x; }
.l0 .branch { background: linear-gradient(90deg, #888 50%, transparent 0) 0 9px / 2px 1px repeat-x; }
.last .branch { background: linear-gradient(90deg, #888 50%, transparent 0) 3px 9px / 2px 1px repeat-x; }
.branch svg { background: #fff; height: 12px; margin-top: 2px; }
.node { display: flex; align-items: center; gap: 5px; padding: 0 2px 0 0; border: 1px solid transparent; border-radius: 2px; white-space: nowrap; }
.selected { border-color: #84acdd; background: linear-gradient(#f0f6fe, #cfe2fa); }
.values { flex: 1; border: 1px solid #828790; background: #fff; }
.values table { width: 100%; border-collapse: collapse; table-layout: fixed; }
.values th { height: 24px; padding: 2px 7px 0; border-bottom: 1px solid #d5d5d5; background: linear-gradient(#fff, #fff 40%, #f4f4f5); font-weight: 400; text-align: left; }
.values .c1 { width: 120px; border-right: 1px solid #e4e5e8; }
.status { display: flex; justify-content: space-between; align-items: center; height: 23px; flex: none; padding: 2px 2px 0; background: #f0eff0; }
.status svg { align-self: flex-end; margin-bottom: 2px; }

.cursor { position: absolute; left: 799px; top: 262px; width: 15px; height: 21px; }

.taskbar { position: absolute; left: 0; right: 0; bottom: 0; height: 40px; display: flex; align-items: stretch; gap: 2px; border-top: 1px solid #33506e; background: linear-gradient(rgba(255, 255, 255, .25), transparent 3px), linear-gradient(90deg, #97a9bf, #a4b6cc 130px, #a7bcd8 600px, #a6c1df 800px, #748ca9 850px, #7088a5); }
.start { width: 57px; display: flex; align-items: center; justify-content: center; padding-right: 3px; }
.task { width: 60px; display: flex; align-items: center; justify-content: center; }
.running { border: 1px solid #45566c; border-radius: 3px; background: linear-gradient(135deg, #d2ddea, #b3c4d9 50%, #c2d1e3); box-shadow: inset 0 0 0 1px rgba(255, 255, 255, .5); }
.active { background: linear-gradient(135deg, #eef4fa, #d0dcea 50%, #dde7f2); }
.tray { display: flex; align-items: center; gap: 8px; margin-right: 12px; }
.tray svg:first-child { margin-right: 4px; }
.time { display: flex; flex-direction: column; justify-content: center; align-items: center; line-height: 17px; color: #fff; margin-right: 5px; }
.peek { width: 15px; border: 1px solid #3d5269; border-right: 0; background: linear-gradient(135deg, #8fa3b9, #5b7189 50%, #7e93aa); box-shadow: inset 1px 1px 0 rgba(255, 255, 255, .3); }
</style>
